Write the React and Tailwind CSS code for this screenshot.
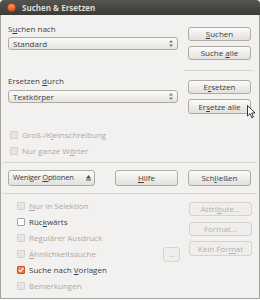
import React from 'react';

const Btn = ({ children, className = '', disabled = false }) => (
  <div
    className={`flex items-center justify-center rounded-[3px] border text-[8px] leading-none ${
      disabled
        ? 'border-[#d6d3cd] bg-[#efeeec] text-[#b3b0ab]'
        : 'border-[#aeaba5] bg-gradient-to-b from-[#fbfbfa] to-[#e1e0dd] text-[#3c3c3c]'
    } ${className}`}
  >
    {children}
  </div>
);

const U = ({ children }) => <span className="underline underline-offset-1">{children}</span>;

const Combo = ({ children }) => (
  <div className="flex h-[13px] items-center justify-between rounded-[3px] border border-[#aeaba5] bg-gradient-to-b from-[#fbfbfa] to-[#e4e3e0] pl-[4px] pr-[4px] text-[8px] leading-none text-[#3c3c3c]">
    <span>{children}</span>
    <svg width="4" height="7" viewBox="0 0 4 7">
      <path d="M2 0 L4 2.5 L0 2.5 Z" fill="#7a7a7a" />
      <path d="M2 7 L4 4.5 L0 4.5 Z" fill="#7a7a7a" />
    </svg>
  </div>
);

const Check = ({ children, state = 'disabled' }) => {
  const box =
    state === 'checked'
      ? 'border-[#c9551f] bg-gradient-to-b from-[#f6915f] to-[#e9672e]'
      : state === 'off'
      ? 'border-[#a8a59f] bg-white'
      : 'border-[#d3d0ca] bg-[#e6e5e2]';
  return (
    <div className="flex h-[16px] items-center pl-[9px]">
      <div className={`flex h-[8px] w-[8px] items-center justify-center rounded-[1px] border ${box}`}>
        {state === 'checked' && (
          <svg width="6" height="6" viewBox="0 0 6 6">
            <path d="M0.8 3 L2.4 4.6 L5.3 1.2" stroke="#fff" strokeWidth="1.2" fill="none" />
          </svg>
        )}
      </div>
      <span
        className={`ml-[4px] text-[8px] leading-none ${
          state === 'disabled' ? 'text-[#aaa8a3]' : 'text-[#3c3c3c]'
        }`}
      >
        {children}
      </span>
    </div>
  );
};

export default function App() {
  return (
    <div className="relative h-[300px] w-[260px] bg-white font-['Open_Sans',sans-serif]">
      {/* title bar */}
      <div className="flex h-[15px] items-center rounded-t-[4px] bg-gradient-to-b from-[#55544f] to-[#3c3b37]">
        <div className="ml-[7px] h-[9px] w-[9px] rounded-full border border-[#b8461a] bg-gradient-to-b from-[#f59a6c] to-[#e0531e]" />
        <span className="ml-[6px] text-[8px] font-bold leading-none text-[#dfdbd2]">Suchen &amp; Ersetzen</span>
      </div>

      <div className="flex h-[284px] flex-col border-x border-b border-[#a3a19c] bg-[#f2f1f0]">
        {/* search / replace */}
        <div className="flex h-[112px] px-[7px]">
          <div className="w-[170px]">
            <div className="mt-[8px] flex h-[11px] items-center text-[8px] leading-none text-[#3c3c3c]">
              S<U>u</U>chen nach
            </div>
            <div className="mt-[3px]">
              <Combo>Standard</Combo>
            </div>
            <div className="mt-[25px] flex h-[11px] items-center text-[8px] leading-none text-[#3c3c3c]">
              Ersetzen&nbsp;<U>d</U>urch
            </div>
            <div className="mt-[4px]">
              <Combo>Textkörper</Combo>
            </div>
          </div>
          <div className="ml-[10px] flex w-[63px] flex-col">
            <Btn className="mt-[12px] h-[14px]">
              <U>S</U>uchen
            </Btn>
            <Btn className="mt-[5px] h-[14px]">
              Suche&nbsp;<U>a</U>lle
            </Btn>
            <div className="-ml-[4px] mt-[10px] h-px w-[69px] bg-[#d8d6d1]" />
            <Btn className="mt-[9px] h-[14px]">
              E<U>r</U>setzen
            </Btn>
            <Btn className="mt-[5px] h-[15px]">
              Er<U>s</U>etze alle
            </Btn>
          </div>
        </div>

        <Check>
          Groß-/K<U>l</U>einschreibung
        </Check>
        <Check>
          Nur ganze W<U>ö</U>rter
        </Check>

        <div className="mx-[2px] mt-[3px] h-px bg-[#d8d6d1]" />

        {/* buttons row */}
        <div className="mt-[7px] flex h-[16px] px-[7px]">
          <Btn className="w-[87px] justify-start pl-[4px]">
            <span className="w-[69px] whitespace-nowrap text-[7.5px] tracking-[-0.2px]">
              Weniger <U>O</U>ptionen
            </span>
            <svg className="ml-[4px]" width="5" height="6" viewBox="0 0 5 6">
              <path d="M2.5 0 L5 3.5 L0 3.5 Z" fill="#4a4a4a" />
              <rect x="0" y="4.5" width="5" height="1" fill="#4a4a4a" />
            </svg>
          </Btn>
          <Btn className="ml-[20px] w-[63px]">
            <U>H</U>ilfe
          </Btn>
          <Btn className="ml-[10px] w-[63px]">
            Sch<U>l</U>ießen
          </Btn>
        </div>

        <div className="mx-[2px] mt-[7px] h-px bg-[#d8d6d1]" />

        {/* options */}
        <div className="flex flex-1 px-[7px]">
          <div className="flex-1 pt-[4px]">
            <Check>
              <U>N</U>ur in Selektion
            </Check>
            <Check state="off">
              Rüc<U>k</U>wärts
            </Check>
            <Check>Regulärer Ausdruck</Check>
            <Check>
              <U>Ä</U>hnlichkeitssuche
            </Check>
            <Check state="checked">
              Suche nach <U>V</U>orlagen
            </Check>
            <Check>Bemerkungen</Check>
          </div>
          <Btn disabled className="mr-[9px] mt-[53px] h-[15px] w-[17px] items-end pb-[3px] text-[5px]">
            ...
          </Btn>
          <div className="flex w-[63px] flex-col">
            <Btn disabled className="mt-[8px] h-[14px]">
              Attri<U>b</U>ute...
            </Btn>
            <Btn disabled className="mt-[6px] h-[14px]">
              Format...
            </Btn>
            <Btn disabled className="mt-[5px] h-[15px]">
              Kein For<U>m</U>at
            </Btn>
          </div>
        </div>
      </div>

      {/* mouse cursor */}
      <svg className="absolute left-[247px] top-[105px]" width="9" height="14" viewBox="0 0 9 14">
        <path d="M0.5 0.5 L0.5 11 L3 8.6 L4.8 12.8 L6.4 12.1 L4.7 8 L8 8 Z" fill="#fff" stroke="#222" strokeWidth="0.9" strokeLinejoin="round" />
      </svg>
    </div>
  );
}
